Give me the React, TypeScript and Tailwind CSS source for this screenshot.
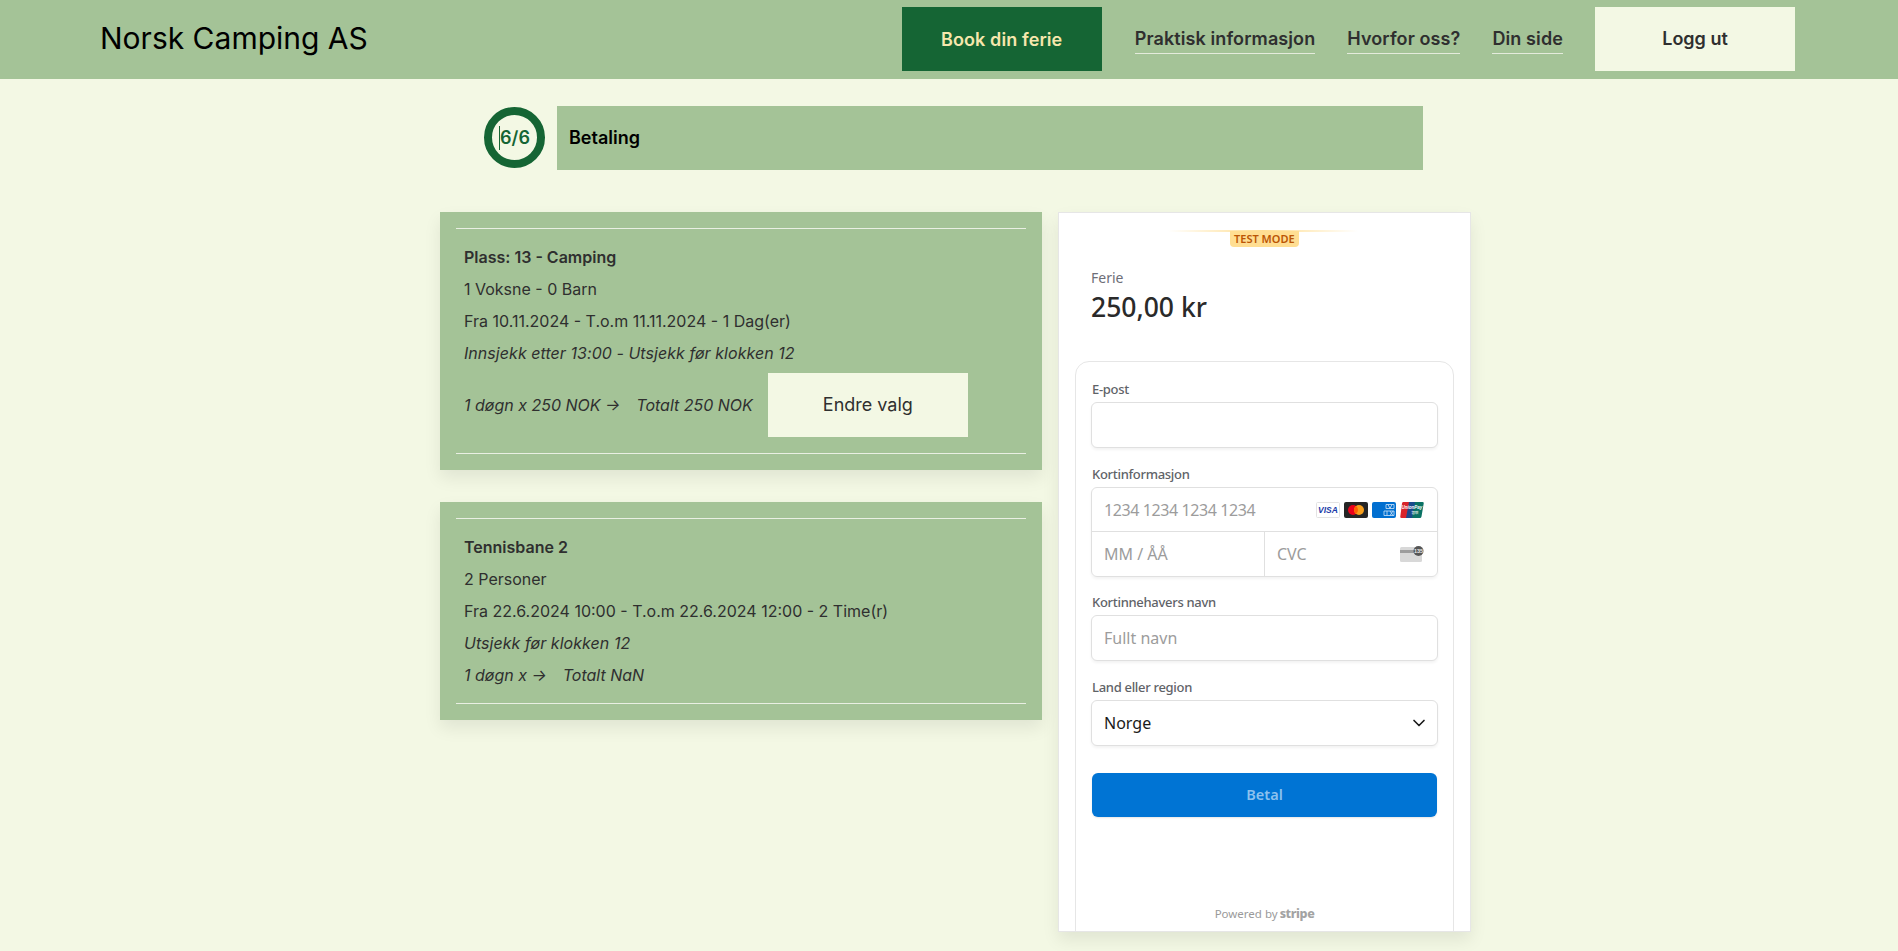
import { ChevronDown } from 'lucide-react'

const inter = 'font-["Inter",sans-serif]'
const noto = 'font-["Noto_Sans",sans-serif]'

const NavLink = ({ children }: { children: string }) => (
  <a className="border-b border-[#e4ebdc] pt-[2px] pb-[2px] text-[18px] leading-[24px] font-semibold tracking-[0.1px] text-[#2f2f2f]">
    {children}
  </a>
)

const VisaIcon = () => (
  <svg width="24" height="16" viewBox="0 0 24 16">
    <rect x="0.5" y="0.5" width="23" height="15" rx="1" fill="#fff" stroke="#e3e3e3" />
    <text x="12" y="11" textAnchor="middle" fontSize="8.5" fontWeight="800" fontStyle="italic" fill="#1a3aa8" fontFamily="Liberation Sans">
      VISA
    </text>
  </svg>
)

const MastercardIcon = () => (
  <svg width="24" height="16" viewBox="0 0 24 16">
    <rect width="24" height="16" rx="2" fill="#252525" />
    <circle cx="9" cy="8" r="5" fill="#eb001b" />
    <circle cx="15" cy="8" r="5" fill="#f79e1b" />
    <path d="M12 4a5 5 0 0 1 0 8 5 5 0 0 1 0-8z" fill="#ff5f00" />
  </svg>
)

const AmexIcon = () => (
  <svg width="24" height="16" viewBox="0 0 24 16">
    <rect width="24" height="16" rx="2" fill="#016fd0" />
    <g fill="none" stroke="#cfe4f7" strokeWidth="0.8">
      <path d="M14 2.5h8v4h-8zM16 2.5l2 4 2-4" />
      <path d="M12 9h10v4.5H12zM15 9v4.5M18 9l3 4.5M21 9l-3 4.5" />
    </g>
  </svg>
)

const UnionPayIcon = () => (
  <svg width="24" height="16" viewBox="0 0 24 16">
    <path d="M3 0h7L7 16H1.500Q0 16 .3 14.500L2 1.500Q2.200 0 3 0z" fill="#d8232a" />
    <path d="M9 0h7l-3 16H6z" fill="#1a4a8c" />
    <path d="M15 0h7.500Q24 0 23.700 1.500L21.500 14.500Q21.200 16 20 16h-8z" fill="#0a7264" />
    <text x="12" y="7" textAnchor="middle" fontSize="4.500" fontStyle="italic" fontWeight="700" fill="#fff" fontFamily="Liberation Sans">
      UnionPay
    </text>
    <text x="15" y="12" textAnchor="middle" fontSize="3.500" fill="#fff" fontFamily="Noto Sans CJK SC">
      银联
    </text>
  </svg>
)

const CvcIcon = () => (
  <svg width="24" height="16" viewBox="0 0 24 16">
    <rect x="0" y="1" width="22" height="15" rx="1.500" fill="#d8d8d8" />
    <rect x="0" y="4" width="22" height="3" fill="#9d9d9d" />
    <circle cx="18.500" cy="5" r="5" fill="#555" />
    <text x="18.500" y="7" textAnchor="middle" fontSize="5.500" fontWeight="700" fill="#e8e8e8" fontFamily="Liberation Sans">
      135
    </text>
  </svg>
)

const CardRule = () => <hr className="border-t border-[#e9efe3]" />

const BookingCard = ({ lines }: { lines: React.ReactNode }) => (
  <section className="bg-[#a4c397] px-4 pt-4 pb-4 text-[16px] leading-[32px] text-[#2f2f2f] shadow-[0_8px_16px_rgba(0,0,0,0.08)]">
    <CardRule />
    <div className="px-2 py-3">{lines}</div>
    <CardRule />
  </section>
)

const FieldLabel = ({ children }: { children: string }) => (
  <label className="mb-[3px] ml-[1px] block pt-[1px] text-[13px] leading-[20px] font-medium tracking-[-0.3px] text-[#5f6368]">
    {children}
  </label>
)

const inputBox =
  'h-[46px] w-full rounded-[6px] border border-[#e0e0e0] bg-white px-[12px] text-[16px] shadow-[0_2px_3px_rgba(0,0,0,0.05)] outline-none placeholder:text-[#9c9c9c]'

const StripeCheckout = () => (
  <aside className={`${noto} relative h-[720px] w-[413px] shrink-0 overflow-hidden border border-[#e6e6e6] bg-white shadow-[0_8px_16px_rgba(0,0,0,0.08)]`}>
    <div className="absolute top-[17px] left-[109px] h-[2px] w-[190px] bg-gradient-to-r from-transparent via-[#ffde92] to-transparent" />
    <div className="absolute top-[18px] left-[171px] h-[16px] rounded-b-[4px] bg-[#ffde92] px-1 text-[11px] leading-[15px] font-semibold whitespace-nowrap text-[#bb5504]">
      TEST MODE
    </div>

    <div className="pt-[55px] pl-[32px]">
      <p className="text-[14px] leading-[20px] text-[#6d6e78]">Ferie</p>
      <p className="mt-[2px] text-[26.500px] leading-[34px] font-medium text-[#2a2a2a]">250,00 kr</p>
    </div>

    <div className="mx-[16px] mt-[37px] h-[600px] rounded-t-[14px] border border-[#e6e6e6] px-[15px] pt-[16px]">
      <FieldLabel>E-post</FieldLabel>
      <input className={inputBox} />

      <div className="mt-[15px]">
        <FieldLabel>Kortinformasjon</FieldLabel>
        <div className="h-[90px] rounded-[6px] border border-[#e0e0e0] text-[16px] text-[#9c9c9c] shadow-[0_2px_3px_rgba(0,0,0,0.05)]">
          <div className="flex h-[44px] items-center justify-between border-b border-[#e0e0e0] pr-[13px] pl-[12px]">
            <span className="tracking-[-0.4px]">1234 1234 1234 1234</span>
            <span className="flex gap-[4px]">
              <VisaIcon />
              <MastercardIcon />
              <AmexIcon />
              <UnionPayIcon />
            </span>
          </div>
          <div className="flex h-[44px]">
            <div className="flex w-[173px] items-center border-r border-[#e0e0e0] pl-[12px]">MM / ÅÅ</div>
            <div className="flex flex-1 items-center justify-between pr-[13px] pl-[12px]">
              <span>CVC</span>
              <CvcIcon />
            </div>
          </div>
        </div>
      </div>

      <div className="mt-[14px]">
        <FieldLabel>Kortinnehavers navn</FieldLabel>
        <input className={inputBox} placeholder="Fullt navn" />
      </div>

      <div className="mt-[15px]">
        <FieldLabel>Land eller region</FieldLabel>
        <div className={`${inputBox} flex items-center justify-between pr-[8px] text-[#1a1a1a]`}>
          <span>Norge</span>
          <ChevronDown size={20} strokeWidth={2} />
        </div>
      </div>

      <button
        type="button"
        className="mx-[1px] mt-[27px] h-[44px] w-[345px] rounded-[6px] bg-[#0074d4] text-[14.500px] font-semibold text-[#8cc1ee] shadow-[0_1px_2px_rgba(0,0,0,0.1)]"
      >
        Betal
      </button>
    </div>

    <div className="absolute right-0 bottom-[9px] left-0 flex items-center justify-center gap-[2px] text-[11.500px] leading-[16px] text-[#9a9a9a]">
      Powered by <span className="text-[12.500px] font-extrabold tracking-[-0.4px] text-[#a3a3a3]">stripe</span>
    </div>
  </aside>
)

export default function App() {
  return (
    <div className={`${inter} min-h-[951px] bg-[#f3f8e4]`}>
      <header className="flex h-[79px] items-start justify-between bg-[#a4c397] pr-[103px] pl-[100px]">
        <h1 className="mt-[20px] text-[30px] leading-[36px] font-normal text-black">Norsk Camping AS</h1>
        <nav className="mt-[7px] flex items-center gap-[32px]">
          <a className="mr-[1px] flex h-[64px] w-[200px] items-center justify-center bg-[#156534] text-[18px] font-semibold tracking-[0.1px] text-[#f6e7ad]">
            Book din ferie
          </a>
          <NavLink>Praktisk informasjon</NavLink>
          <NavLink>Hvorfor oss?</NavLink>
          <NavLink>Din side</NavLink>
          <a className="flex h-[64px] w-[200px] items-center justify-center bg-[#f3f8e4] pb-[1px] text-[18px] font-semibold text-[#2f2f2f]">
            Logg ut
          </a>
        </nav>
      </header>

      <main className="ml-[440px] w-[1031px] pt-[27px]">
        <div className="ml-[44px] flex w-[939px] items-start gap-[12px]">
          <div className="mt-[1px] flex h-[61px] w-[61px] shrink-0 items-center justify-center rounded-full border-[8px] border-[#156534] text-[18px] font-semibold text-[#156534]">
            <span className="border-l border-[#156534] leading-[24px]">6/6</span>
          </div>
          <div className="flex h-[64px] flex-1 items-center bg-[#a4c397] px-3 pb-[1px] text-[18px] font-semibold text-black">
            Betaling
          </div>
        </div>

        <div className="mt-[42px] flex items-start gap-[16px]">
          <div className="flex w-[602px] shrink-0 flex-col gap-[32px]">
            <BookingCard
              lines={
                <>
                  <p className="font-semibold">Plass: 13 - Camping</p>
                  <p>1 Voksne - 0 Barn</p>
                  <p>Fra 10.11.2024 - T.o.m 11.11.2024 - 1 Dag(er)</p>
                  <p className="tracking-[0.05px] italic">Innsjekk etter 13:00 - Utsjekk før klokken 12</p>
                  <div className="my-1 flex items-center italic">
                    <span className="mr-[16px]">1 døgn x 250 NOK →</span>
                    <span className="mr-[15px]">Totalt 250 NOK</span>
                    <button type="button" className="h-[64px] w-[200px] bg-[#f3f8e4] text-[18px] text-[#2f2f2f] not-italic">
                      Endre valg
                    </button>
                  </div>
                </>
              }
            />
            <BookingCard
              lines={
                <>
                  <p className="font-semibold">Tennisbane 2</p>
                  <p>2 Personer</p>
                  <p>Fra 22.6.2024 10:00 - T.o.m 22.6.2024 12:00 - 2 Time(r)</p>
                  <p className="tracking-[0.05px] italic">Utsjekk før klokken 12</p>
                  <div className="flex gap-[16px] italic">
                    <span>1 døgn x →</span>
                    <span>Totalt NaN</span>
                  </div>
                </>
              }
            />
          </div>
          <StripeCheckout />
        </div>
      </main>
    </div>
  )
}
